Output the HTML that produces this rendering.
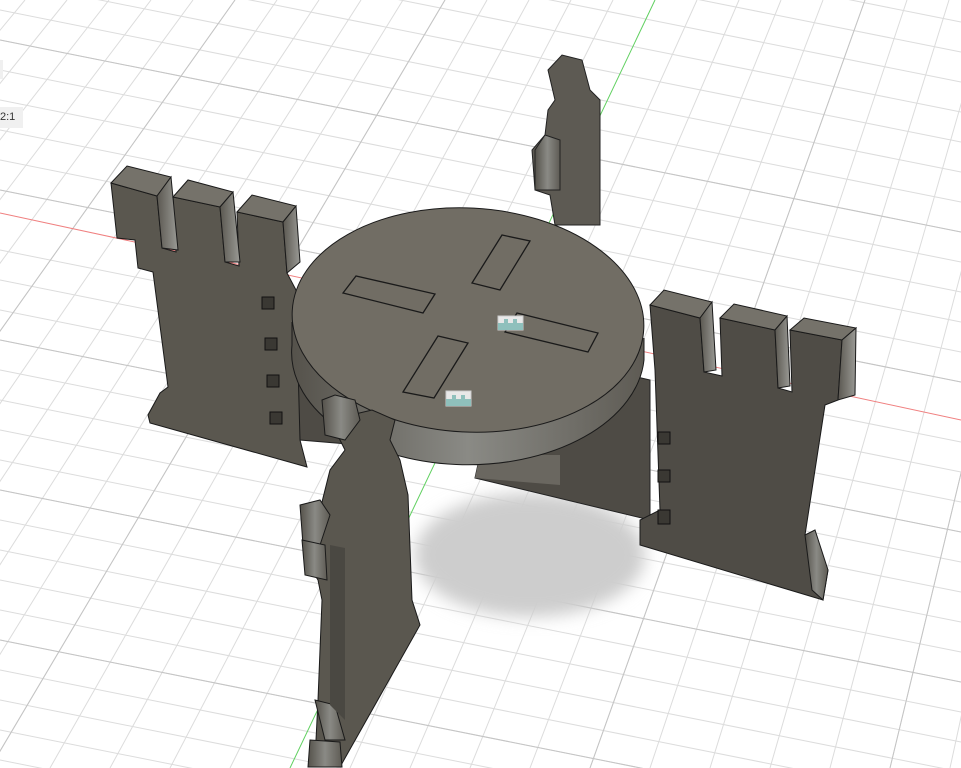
<!DOCTYPE html>
<html><head><meta charset="utf-8"><style>
html,body{margin:0;padding:0;background:#fff;overflow:hidden;width:961px;height:768px;position:relative}
svg{display:block;position:absolute;left:0;top:0}
.lbl{position:absolute;left:0;top:107px;width:23px;height:21px;background:#f0f0f0;font:11px "Liberation Sans",sans-serif;color:#333;line-height:21px;}
.lb2{position:absolute;left:0;top:60px;width:3px;height:19px;background:#f0f0f0}
</style></head><body>
<svg width="961" height="768" viewBox="0 0 961 768" xmlns="http://www.w3.org/2000/svg">
<defs>
<filter id="bl" x="-50%" y="-50%" width="200%" height="200%"><feGaussianBlur stdDeviation="8"/></filter>
<linearGradient id="sd" x1="0" x2="1"><stop offset="0" stop-color="#55524b"/><stop offset=".5" stop-color="#8a8a85"/><stop offset="1" stop-color="#5e5b54"/></linearGradient>
<linearGradient id="ms" x1="0" x2="1"><stop offset="0" stop-color="#5a5750"/><stop offset="1" stop-color="#9a9a95"/></linearGradient>
</defs>
<g stroke="#dcdcdc" stroke-width="1" fill="none">
<path d="M0,-200L961,-8M0,-170L961,22M0,-140L961,52M0,-110L961,82M0,-80L961,112M0,-50L961,142M0,-20L961,172M0,10L961,202M0,40L961,232M0,70L961,262M0,100L961,292M0,130L961,322M0,160L961,352M0,190L961,382M0,250L961,442M0,280L961,472M0,310L961,502M0,340L961,532M0,370L961,562M0,400L961,592M0,430L961,622M0,460L961,652M0,490L961,682M0,520L961,712M0,550L961,742M0,580L961,772M0,610L961,802M0,640L961,832M0,670L961,862M0,700L961,892M0,730L961,922M0,760L961,952"/>
<path d="M-17,0L-670,768M25,0L-610,768M67,0L-550,768M109,0L-490,768M151,0L-430,768M193,0L-370,768M235,0L-310,768M277,0L-250,768M319,0L-190,768M361,0L-130,768M403,0L-70,768M445,0L-10,768M487,0L50,768M529,0L110,768M571,0L170,768M613,0L230,768M697,0L350,768M739,0L410,768M781,0L470,768M823,0L530,768M865,0L590,768M907,0L650,768M949,0L710,768M991,0L770,768M1033,0L830,768M1075,0L890,768M1117,0L950,768M1159,0L1010,768M1201,0L1070,768M1243,0L1130,768M1285,0L1190,768"/>
</g>
<g stroke="#c4c4c4" stroke-width="1" fill="none">
<path d="M0,40L961,232M0,190L961,382M0,340L961,532M0,490L961,682M0,640L961,832"/>
<path d="M445,0L-10,768M865,0L590,768M1075,0L890,768M235,0L-310,768"/>
</g>
<path d="M0,213L961,420" stroke="#f08080" stroke-width="1"/>
<path d="M655,0L290,768" stroke="#60d060" stroke-width="1"/>
<ellipse cx="530" cy="555" rx="115" ry="62" fill="#cdcdcd" filter="url(#bl)"/>
<!-- back tower -->
<polygon points="548,70 562,55 582,60 590,90 600,100 600,225 555,225 550,195 535,190 532,150 545,135 548,110 555,100" fill="#5d5a53" stroke="#222" stroke-width="1"/>
<polygon points="535,150 545,135 560,140 560,190 535,190" fill="url(#sd)" stroke="#222"/>
<!-- long plank under disk -->
<polygon points="280,295 650,380 650,520 475,478 480,455 300,440" fill="#4e4b45" stroke="#222"/>
<polygon points="480,455 560,455 560,485 475,478" fill="#6a6760"/>
<!-- left tower -->
<polygon points="111,183 157,196 162,248 176,252 173,197 220,207 225,262 239,266 237,212 283,222 287,273 296,290 300,440 307,467 150,423 148,415 160,393 168,387 153,272 138,268 135,240 117,238" fill="#5a574f" stroke="#1a1a1a"/>
<polygon points="111,183 127,166 171,177 157,196" fill="#75726a" stroke="#1a1a1a"/>
<polygon points="157,196 171,177 178,250 162,248" fill="url(#ms)" stroke="#1a1a1a"/>
<polygon points="173,197 188,180 233,192 220,207" fill="#75726a" stroke="#1a1a1a"/>
<polygon points="220,207 233,192 240,262 225,262" fill="url(#ms)" stroke="#1a1a1a"/>
<polygon points="237,212 252,195 296,206 283,222" fill="#75726a" stroke="#1a1a1a"/>
<polygon points="283,222 296,206 300,262 287,273" fill="url(#ms)" stroke="#1a1a1a"/>
<g fill="#3a3833" stroke="#111"><rect x="262" y="297" width="12" height="12"/><rect x="265" y="338" width="12" height="12"/><rect x="267" y="375" width="12" height="12"/><rect x="270" y="412" width="12" height="12"/></g>
<!-- right tower -->
<polygon points="650,305 700,318 704,372 722,376 720,318 775,330 778,388 792,392 790,330 842,340 838,400 825,405 805,535 828,570 823,600 640,545 640,520 660,510 655,370" fill="#4f4c46" stroke="#1a1a1a"/>
<polygon points="650,305 664,290 712,302 700,318" fill="#75726a" stroke="#1a1a1a"/>
<polygon points="700,318 712,302 716,370 704,372" fill="url(#ms)" stroke="#1a1a1a"/>
<polygon points="720,318 734,304 787,316 775,330" fill="#75726a" stroke="#1a1a1a"/>
<polygon points="775,330 787,316 790,386 778,388" fill="url(#ms)" stroke="#1a1a1a"/>
<polygon points="790,330 804,318 856,328 842,340" fill="#75726a" stroke="#1a1a1a"/>
<polygon points="842,340 856,328 855,395 838,400" fill="url(#ms)" stroke="#1a1a1a"/>
<polygon points="805,535 815,530 828,570 823,600 812,590" fill="url(#sd)" stroke="#1a1a1a"/>
<g fill="#3a3833" stroke="#111"><rect x="658" y="432" width="12" height="12"/><rect x="658" y="470" width="12" height="12"/><rect x="658" y="510" width="12" height="14"/></g>
<!-- disk -->
<path d="M292,322 A176,112 0 0 0 644,338 L644,360 A176,100 0 0 1 292,345 Z" fill="#4e4b45"/>
<path d="M292,322 L292,345 A176,112 0 0 0 644,360 L644,338" fill="url(#sd)" stroke="#1a1a1a"/>
<ellipse cx="468" cy="320" rx="176" ry="112" transform="rotate(3 468 320)" fill="#716d64" stroke="#1a1a1a"/>
<g fill="none" stroke="#1a1a1a" stroke-width="1.3">
<polygon points="343,293 356,276 435,294 423,313"/>
<polygon points="472,283 502,235 530,241 500,290"/>
<polygon points="505,332 517,313 598,333 588,352"/>
<polygon points="403,392 438,336 468,343 434,398"/>
</g>
<g><rect x="498" y="316" width="25" height="14" fill="#e8e8e8" stroke="#ccc"/><rect x="498" y="323" width="25" height="7" fill="#8fc0bc"/><rect x="504" y="319" width="4" height="5" fill="#8fc0bc"/><rect x="513" y="319" width="4" height="5" fill="#8fc0bc"/></g>
<g><rect x="446" y="391" width="25" height="15" fill="#e8e8e8" stroke="#ccc"/><rect x="446" y="399" width="25" height="7" fill="#8fc0bc"/><rect x="452" y="395" width="4" height="5" fill="#8fc0bc"/><rect x="461" y="395" width="4" height="5" fill="#8fc0bc"/></g>
<!-- front tower -->
<polygon points="330,420 372,410 395,420 390,440 400,460 408,495 412,600 420,625 340,767 315,760 318,700 322,600 318,580 305,560 305,520 320,510 330,470 345,450" fill="#5a574f" stroke="#1a1a1a"/>
<polygon points="322,400 335,395 355,400 360,420 345,440 325,435" fill="url(#sd)" stroke="#1a1a1a"/>
<polygon points="300,505 320,500 330,515 320,545 303,545" fill="url(#sd)" stroke="#1a1a1a"/>
<polygon points="302,540 325,545 327,580 305,575" fill="url(#sd)" stroke="#1a1a1a"/>
<polygon points="315,700 335,705 345,740 325,740" fill="url(#sd)" stroke="#1a1a1a"/>
<polygon points="310,740 340,742 342,767 308,767" fill="url(#sd)" stroke="#1a1a1a"/>
<polygon points="330,545 345,548 345,720 330,705" fill="#4a4842"/>
</svg>
<div class="lb2"></div>
<div class="lbl">2:1</div>
</body></html>
